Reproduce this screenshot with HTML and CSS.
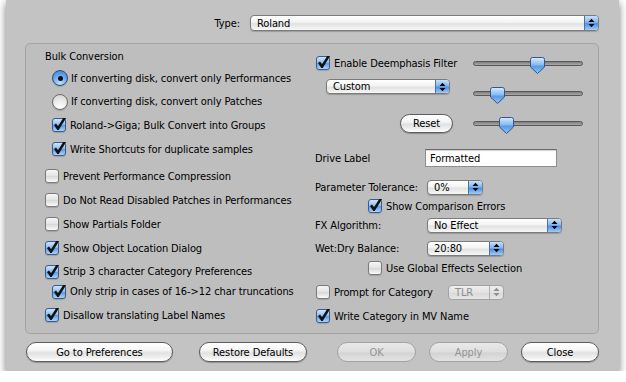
FILE: index.html
```html
<!DOCTYPE html>
<html lang="en">
<head>
    <meta charset="UTF-8">
    <title>Roland Conversion Options</title>
    <link rel="stylesheet" href="styles.css">
</head>
<body>
<svg class="defs" width="0" height="0">
    <defs>
        <linearGradient id="thumbFill" x1="0" y1="0" x2="0" y2="1">
            <stop offset="0" stop-color="#d9ebfd"/>
            <stop offset="0.45" stop-color="#86bbf3"/>
            <stop offset="0.55" stop-color="#5a9be8"/>
            <stop offset="1" stop-color="#8fc6f7"/>
        </linearGradient>
        <symbol id="thumb" viewBox="0 0 15 17">
            <path d="M2.5 0.5 H12.5 Q14.5 0.5 14.5 2.5 V10 L7.5 16.5 L0.5 10 V2.5 Q0.5 0.5 2.5 0.5 Z"
                  fill="url(#thumbFill)" stroke="#34548a" stroke-width="1"/>
        </symbol>
        <symbol id="tick" viewBox="0 0 14 14">
            <polygon points="2,7 4,5.4 6,8.2 12.7,-2.4 15,-1.4 6.7,12 5.3,12" fill="#111"/>
        </symbol>
        <symbol id="arrows" viewBox="0 0 7 10">
            <polygon points="0.5,4 3.5,0.8 6.5,4" fill="currentColor"/>
            <polygon points="0.5,6 6.5,6 3.5,9.2" fill="currentColor"/>
        </symbol>
    </defs>
</svg>

<div class="window">
    <div class="type-row">
        <span>Type:</span>
        <div class="popup w-type"><span class="popup-text">Roland</span><span class="cap"><svg><use href="#arrows"/></svg></span></div>
    </div>

    <div class="group">
        <div class="col-left">
            <div class="row h20 flat">Bulk Conversion</div>
            <div class="row h24 indent"><span class="radio on"></span>If converting disk, convert only Performances</div>
            <div class="row h23 indent"><span class="radio"></span>If converting disk, convert only Patches</div>
            <div class="row h24 indent"><span class="box on"><svg><use href="#tick"/></svg></span>Roland-&gt;Giga; Bulk Convert into Groups</div>
            <div class="row h24 indent"><span class="box on"><svg><use href="#tick"/></svg></span>Write Shortcuts for duplicate samples</div>
            <div class="row h24 flat mt3"><span class="box"></span>Prevent Performance Compression</div>
            <div class="row h24 flat"><span class="box"></span>Do Not Read Disabled Patches in Performances</div>
            <div class="row h24 flat"><span class="box"></span>Show Partials Folder</div>
            <div class="row h24 flat"><span class="box on"><svg><use href="#tick"/></svg></span>Show Object Location Dialog</div>
            <div class="row h23 flat"><span class="box on"><svg><use href="#tick"/></svg></span>Strip 3 character Category Preferences</div>
            <div class="row h17 indent"><span class="box on"><svg><use href="#tick"/></svg></span>Only strip in cases of 16-&gt;12 char truncations</div>
            <div class="row h24 flat mt3"><span class="box on"><svg><use href="#tick"/></svg></span>Disallow translating Label Names</div>
        </div>

        <div class="col-right">
            <div class="filter">
                <div class="row pad1"><span class="box on"><svg><use href="#tick"/></svg></span>Enable Deemphasis Filter</div>
                <div class="slider"><svg class="thumb" style="left: 56px"><use href="#thumb"/></svg></div>
                <div class="popup w-custom"><span class="popup-text">Custom</span><span class="cap"><svg><use href="#arrows"/></svg></span></div>
                <div class="slider"><svg class="thumb" style="left: 16px"><use href="#thumb"/></svg></div>
                <div class="btn btn-reset">Reset</div>
                <div class="slider"><svg class="thumb" style="left: 25px"><use href="#thumb"/></svg></div>
            </div>

            <div class="row h24 mt8"><span class="lbl lbl-drive">Drive Label</span><span class="field">Formatted</span></div>
            <div class="row h22 mt6"><span class="lbl">Parameter Tolerance:</span>
                <div class="popup w-tol"><span class="popup-text">0%</span><span class="cap"><svg><use href="#arrows"/></svg></span></div></div>
            <div class="row h16 pad53"><span class="box on"><svg><use href="#tick"/></svg></span>Show Comparison Errors</div>
            <div class="row h22"><span class="lbl">FX Algorithm:</span>
                <div class="popup w-fx"><span class="popup-text">No Effect</span><span class="cap"><svg><use href="#arrows"/></svg></span></div></div>
            <div class="row h24"><span class="lbl">Wet:Dry Balance:</span>
                <div class="popup w-wet"><span class="popup-text">20:80</span><span class="cap"><svg><use href="#arrows"/></svg></span></div></div>
            <div class="row h16 pad53"><span class="box"></span>Use Global Effects Selection</div>
            <div class="row h24 mt4 pad1">
                <span class="row prompt"><span class="box"></span>Prompt for Category</span>
                <div class="popup disabled w-tlr"><span class="popup-text">TLR</span><span class="cap"><svg><use href="#arrows"/></svg></span></div>
            </div>
            <div class="row h24 pad1"><span class="box on"><svg><use href="#tick"/></svg></span>Write Category in MV Name</div>
        </div>
    </div>

    <div class="buttons">
        <div class="btn b-prefs">Go to Preferences</div>
        <div class="btn b-restore">Restore Defaults</div>
        <div class="btn disabled b-ok">OK</div>
        <div class="btn disabled b-apply">Apply</div>
        <div class="btn b-close">Close</div>
    </div>
</div>
</body>
</html>
```

FILE: styles.css
```css
body {
    margin: 0;
    background: #ffffff;
    font-family: "DejaVu Sans Condensed", "DejaVu Sans", "Liberation Sans", sans-serif;
    font-stretch: condensed;
    font-size: 11px;
    letter-spacing: -0.1px;
    color: #000;
}

.defs {
    position: absolute;
    width: 0;
    height: 0;
}

.window {
    width: 613px;
    height: 371px;
    margin-left: 6px;
    box-sizing: border-box;
    padding: 15px 20px 0 19px;
    background: #c3c3c3;
    box-shadow: 0 3px 8px rgba(0, 0, 0, 0.55);
    display: flex;
    flex-direction: column;
}

.type-row {
    display: flex;
    justify-content: flex-end;
    align-items: center;
    gap: 10px;
    height: 16px;
}

.group {
    margin-top: 12px;
    height: 291px;
    box-sizing: border-box;
    border: 1px solid #a4a4a4;
    border-radius: 5px;
    background: #bebebe;
    display: grid;
    grid-template-columns: 289px 1fr;
}

.col-left {
    padding: 2px 0 0 17px;
}

.col-right {
    padding-top: 4px;
}

/* rows */
.row {
    display: flex;
    align-items: center;
    white-space: nowrap;
}

.h16 { height: 16px; }
.h17 { height: 17px; }
.h20 { height: 20px; }
.h22 { height: 22px; }
.h23 { height: 23px; }
.h24 { height: 24px; }
.mt3 { margin-top: 3px; }
.mt4 { margin-top: 4px; }
.mt6 { margin-top: 6px; }
.mt8 { margin-top: 8px; }
.flat { padding-left: 2px; }
.indent { padding-left: 9px; }
.pad1 { padding-left: 1px; }
.pad53 { padding-left: 53px; }

/* checkbox */
.box {
    position: relative;
    flex: none;
    width: 14px;
    height: 14px;
    margin-right: 4px;
    box-sizing: border-box;
    border: 1px solid #7a7a7a;
    border-radius: 3px;
    background: linear-gradient(#f6f6f6, #e6e6e6 45%, #d9d9d9 55%, #fbfbfb);
    box-shadow: 0 1px 1px rgba(0, 0, 0, 0.15);
}

.box.on {
    border-color: #3b5b8b;
    background: linear-gradient(#cfe4fb, #92c0f2 45%, #5e9ce7 55%, #a9d4fb);
}

.box svg {
    position: absolute;
    left: -1px;
    top: -1px;
    width: 14px;
    height: 14px;
    overflow: visible;
}

/* radio */
.radio {
    flex: none;
    width: 16px;
    height: 16px;
    margin-right: 3px;
    box-sizing: border-box;
    border: 1px solid #6c6c6c;
    border-radius: 50%;
    background: radial-gradient(circle at 50% 85%, #ffffff, #ececec 45%, #cfcfcf);
    box-shadow: 0 1px 1px rgba(0, 0, 0, 0.15);
    display: flex;
    align-items: center;
    justify-content: center;
}

.radio.on {
    border-color: #2f4f80;
    background: radial-gradient(circle at 50% 85%, #bfe2ff, #6fa9ee 50%, #3d7bd6);
}

.radio.on::after {
    content: "";
    width: 5px;
    height: 5px;
    border-radius: 50%;
    background: #111;
}

/* popup buttons */
.popup {
    height: 15px;
    box-sizing: border-box;
    border: 1px solid #7b7b7b;
    border-radius: 4px;
    background: linear-gradient(#ffffff, #f3f3f3 45%, #e2e2e2 55%, #f7f7f7);
    box-shadow: 0 1px 1px rgba(0, 0, 0, 0.2);
    display: flex;
    align-items: center;
    justify-content: space-between;
    overflow: hidden;
}

.popup-text {
    padding-left: 6px;
}

.cap {
    width: 13px;
    height: 100%;
    border-left: 1px solid #52709b;
    background: linear-gradient(#c9e1fb, #80b6f1 45%, #4c8fe5 55%, #9fcdf8);
    color: #000;
    display: flex;
    align-items: center;
    justify-content: center;
}

.cap svg {
    width: 7px;
    height: 10px;
}

.popup.disabled {
    border-color: #a3a3a3;
    color: #8e8e8e;
    background: linear-gradient(#eeeeee, #e2e2e2 50%, #d9d9d9 55%, #e6e6e6);
    box-shadow: none;
}

.popup.disabled .cap {
    border-left-color: #b0b0b0;
    background: transparent;
    color: #8e8e8e;
}

.w-type { width: 349px; height: 16px; }
.w-custom { width: 124px; margin: 1px 0 0 11px; align-self: start; }
.w-tol { width: 56px; }
.w-fx { width: 135px; }
.w-wet { width: 77px; }
.w-tlr { width: 56px; }

/* deemphasis block */
.filter {
    display: grid;
    grid-template-columns: 158px 110px;
    grid-template-rows: 30px 30px 30px;
}

.slider {
    position: relative;
    align-self: center;
    height: 5px;
    box-sizing: border-box;
    border: 1px solid #575757;
    border-radius: 3px;
    background: linear-gradient(#7e7e7e, #a9a9a9);
}

.thumb {
    position: absolute;
    top: -5px;
    width: 15px;
    height: 17px;
}

/* labels and fields */
.lbl {
    width: 112px;
    flex: none;
}

.lbl-drive {
    width: 110px;
}

.field {
    width: 132px;
    height: 18px;
    box-sizing: border-box;
    padding-left: 4px;
    border: 1px solid #8e8e8e;
    border-top-color: #6a6a6a;
    background: #fff;
    box-shadow: inset 0 1px 1px rgba(0, 0, 0, 0.18);
    display: flex;
    align-items: center;
}

.prompt {
    width: 132px;
}

/* push buttons */
.btn {
    height: 20px;
    box-sizing: border-box;
    border: 1px solid #5c5c5c;
    border-radius: 10px;
    background: linear-gradient(#ffffff, #f5f5f5 40%, #e1e1e1 55%, #efefef 80%, #ffffff);
    box-shadow: 0 1px 1px rgba(0, 0, 0, 0.25);
    display: flex;
    align-items: center;
    justify-content: center;
}

.btn.disabled {
    border-color: #a2a2a2;
    color: #949494;
    background: linear-gradient(#e9e9e9, #dedede 50%, #d3d3d3 55%, #e3e3e3);
    box-shadow: none;
}

.btn-reset {
    width: 53px;
    height: 19px;
    margin-left: 85px;
    align-self: center;
}

.buttons {
    margin-top: 8px;
    display: flex;
}

.b-prefs { width: 147px; margin-left: 1px; }
.b-restore { width: 108px; margin-left: 26px; }
.b-ok { width: 79px; margin-left: 30px; }
.b-apply { width: 79px; margin-left: 13px; }
.b-close { width: 78px; margin-left: 13px; }
```
